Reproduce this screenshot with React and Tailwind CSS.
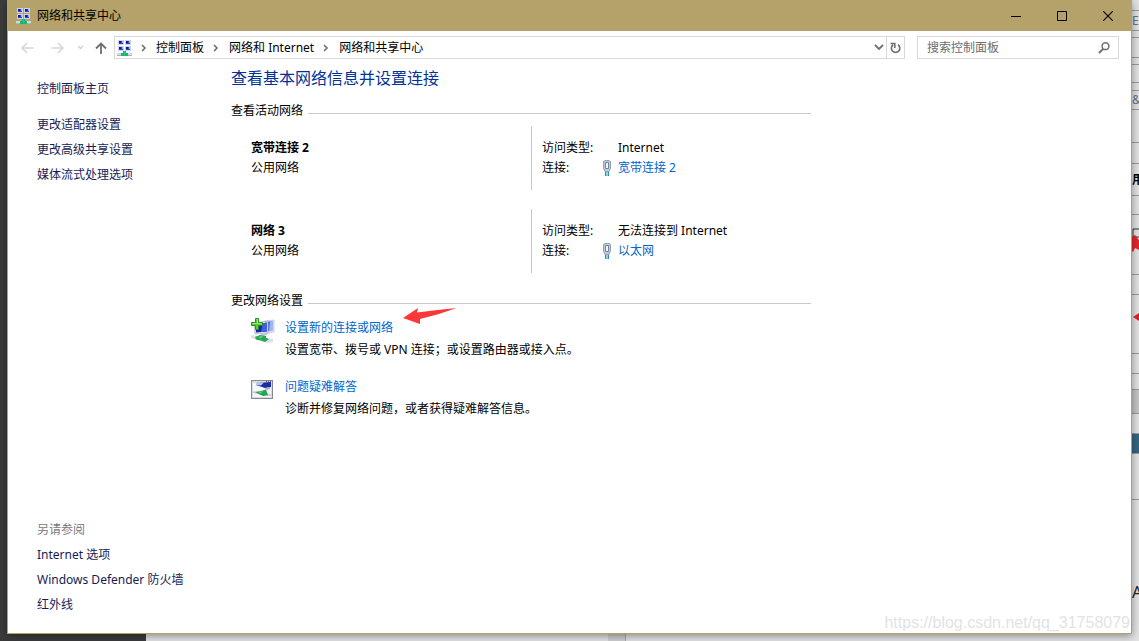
import React from "react";

const sideLinks = ["更改适配器设置", "更改高级共享设置", "媒体流式处理选项"];

const seeAlso = ["Internet 选项", "Windows Defender 防火墙", "红外线"];

const networks = [
  { name: "宽带连接 2", kind: "公用网络", access: "Internet", link: "宽带连接 2" },
  { name: "网络 3", kind: "公用网络", access: "无法连接到 Internet", link: "以太网" },
];

// rows of the window behind, only its edge is visible
const backRows = [
  { size: "h-[11px]" },
  { size: "h-5", text: "E", color: "text-slate-500" },
  { size: "h-[7px]" },
  { size: "h-5" },
  { size: "h-[7px]" },
  { size: "h-[18px]" },
  { size: "h-2" },
  { size: "h-[19px]", text: "&", color: "text-slate-500" },
  { size: "h-[33px]" },
  { size: "h-[21px]" },
  { size: "h-8", text: "用", color: "text-black font-bold" },
  { size: "h-[19px]" },
  { size: "h-[60px]", mark: "big" },
  { size: "h-5" },
  { size: "h-[59px]", mark: "small" },
  { size: "h-5" },
  { size: "h-4" },
  { size: "h-[24px]", fill: "bg-[#c4c4c4]" },
  { size: "h-5", fill: "bg-[#e2e2e2]" },
  { size: "h-5", fill: "bg-[#35647f]" },
  { size: "h-[46px]" },
];

const NetworkIcon = () => (
  <svg width="16" height="16" viewBox="0 0 16 16" className="shrink-0" aria-hidden="true">
    <path fill="#d3d4dd" d="M1 0h6v5H1zM8 0h6v5H8zM1 6h6v5H1zM8 6h6v5H8z" />
    <path fill="#2a49cc" d="M2 1h4v3H2zM9 1h4v3H9zM2 7h4v3H2zM9 7h4v3H9z" />
    <path fill="#8fa9f0" d="M5 1h1v2H5zM12 1h1v2h-1zM5 7h1v2H5zM12 7h1v2h-1z" />
    <path fill="#1018a0" d="M2 1h2v2H2zM9 1h2v2H9zM2 7h2v2H2zM9 7h2v2H9z" />
    <path fill="#d2dada" d="M0 13h15v2H0z" />
    <path fill="#a9b4b4" d="M0 15h15v1H0z" />
    <path fill="#12b878" d="M6 11h3v2h2v3H4v-3h2z" />
    <path fill="#19d08c" d="M7 11h1v4H7z" />
  </svg>
);

const PlugIcon = () => (
  <svg width="10" height="16" viewBox="0 0 10 16" className="shrink-0" aria-hidden="true">
    <path d="M3 .5h4l1.500 1v7L7 11.500H3L1.500 8.500v-7z" fill="#bccad9" stroke="#93a1b5" />
    <path d="M3.500 2.500h3v6h-3z" fill="#f4f7fb" stroke="#74849b" />
    <path d="M3 12h1.500v4H3zM5.500 12H7v4H5.500z" fill="#1e93bd" />
    <path d="M4.500 12h1v3h-1z" fill="#8fdcee" />
  </svg>
);

const NewConnectionIcon = () => (
  <svg width="24" height="26" viewBox="0 0 24 26" className="shrink-0" aria-hidden="true">
    <path d="M13 3l10-1v12l-9 2z" fill="#e1e5f0" stroke="#b3bacb" strokeWidth=".6" />
    <path d="M15 4l7-1v9l-7 2z" fill="#4763dc" />
    <path d="M19 3.500l3-.5v9l-4 1z" fill="#9fb6f4" />
    <path d="M3 5l14-2v12L4 16z" fill="#dfe3ef" stroke="#9ba4bb" strokeWidth=".6" />
    <path d="M4.500 6.500L16 4.500V13.500L5 14.500z" fill="#1727b0" />
    <path d="M12 5.200l4-.7v9l-6 .6z" fill="#3e63df" />
    <path d="M9 16l4-1 4 2-6 1z" fill="#c3c8d4" />
    <path d="M0 17l6 1 16 3v3L16 25 0 20z" fill="#dde1e6" />
    <path d="M4 19l5-2 6 1v2l3 1-4 3-4-1.500-5-1z" fill="#25a955" />
    <path d="M7 19l5-1-2 2z" fill="#7be09a" />
    <path d="M4.500.5h3v4h4v3h-4v4h-3v-4h-4v-3h4z" fill="#5fca3c" stroke="#2c8f22" />
    <path d="M5.500 1.500h1v4h4M1.500 5.500h4" fill="none" stroke="#a2ee7d" />
  </svg>
);

const TroubleshootIcon = () => (
  <svg width="24" height="20" viewBox="0 0 24 20" className="shrink-0" aria-hidden="true">
    <rect x=".5" y=".5" width="21" height="18" fill="#d9dce0" stroke="#84898f" />
    <path d="M2 3h18v14H2z" fill="#f6f8fa" />
    <path d="M15 1.500h1M17 1.500h1M19 1.500h1" stroke="#50545a" />
    <path d="M5 3l15-1v5l-6 1-9-3z" fill="#1b2ba4" />
    <path d="M5 3l8-.5-3 3-5-.5z" fill="#b9c5ec" />
    <path d="M14 8l5-1v2l-4 1z" fill="#aab0bd" />
    <path d="M2 11l7 1 11 2v2h-6L2 13z" fill="#cbd1d5" />
    <path d="M4 12l6-1 5-1.500 1 3 1 2.500-5 1-4-2z" fill="#23a552" />
    <path d="M7 12l5-.5-2 1.500z" fill="#7be09a" />
  </svg>
);

const Chevron = () => (
  <svg width="6" height="8" viewBox="0 0 6 8" className="shrink-0" aria-hidden="true">
    <path d="M1 1l3 3-3 3" fill="none" stroke="#6b6b6b" strokeWidth="1.500" />
  </svg>
);

const SectionTitle = ({ children }) => (
  <div className="flex items-start gap-[5px]">
    <h2 className="leading-[22px]">{children}</h2>
    <div className="mt-[13px] h-px flex-1 bg-[#c8c8c8]" />
  </div>
);

const Backdrop = () => (
  <div className="absolute inset-0 flex" aria-hidden="true">
    <div className="w-[146px] bg-[#3b3b3b]" />
    <div className="flex flex-1 justify-between bg-[#e2e2e2]">
      <div className="ml-[462px] w-[18px] border-r border-[#aaa] bg-[#cfcfcf]" />
      <div className="flex w-[7px] flex-col">
        {backRows.map((row, i) => (
          <div
            key={i}
            className={`flex shrink-0 items-center border-b border-[#999] text-xs ${row.size} ${row.fill || ""}`}
          >
            {row.text && <span className={row.color}>{row.text}</span>}
            {row.mark === "big" && (
              <svg width="7" height="36" viewBox="0 0 7 36" className="mb-1">
                <path d="M7 4H1v8h6" fill="none" stroke="#333" />
                <path d="M0 12l3-2 4 5v10l-4-2-2 4-1-1z" fill="#e2262b" />
              </svg>
            )}
            {row.mark === "small" && (
              <svg width="7" height="8" viewBox="0 0 7 8" className="mb-[15px]">
                <path d="M1 4l6-4v8z" fill="#d9252b" />
              </svg>
            )}
          </div>
        ))}
        <div className="mt-20 text-base text-[#222]">A</div>
      </div>
    </div>
  </div>
);

const TitleBar = () => (
  <header className="flex h-[31px] shrink-0 items-center bg-[#b5a26a] pl-2">
    <NetworkIcon />
    <h1 className="ml-[5px] flex-1">网络和共享中心</h1>
    <button className="flex h-[30px] w-[46px] items-center justify-center" aria-label="最小化">
      <svg width="10" height="10" viewBox="0 0 10 10"><path d="M0 5.500h10" stroke="#000" /></svg>
    </button>
    <button className="flex h-[30px] w-[46px] items-center justify-center" aria-label="最大化">
      <svg width="10" height="10" viewBox="0 0 10 10"><path d="M.5.5h9v9h-9z" fill="none" stroke="#000" /></svg>
    </button>
    <button className="flex h-[30px] w-[46px] items-center justify-center" aria-label="关闭">
      <svg width="10" height="10" viewBox="0 0 10 10"><path d="M0 0l10 10M10 0L0 10" stroke="#000" strokeWidth="1.100" /></svg>
    </button>
  </header>
);

const AddressBar = () => (
  <nav className="flex h-[35px] shrink-0 items-center pr-3 pb-[2px] pl-[13px]">
    <button aria-label="后退">
      <svg width="13" height="12" viewBox="0 0 13 12"><path d="M12.500 6H1.500M6 1L1 6l5 5" fill="none" stroke="#d6d6d6" strokeWidth="1.500" /></svg>
    </button>
    <button className="ml-[17px]" aria-label="前进">
      <svg width="13" height="12" viewBox="0 0 13 12"><path d="M.5 6h11M7 1l5 5-5 5" fill="none" stroke="#d6d6d6" strokeWidth="1.500" /></svg>
    </button>
    <button className="ml-[13px]" aria-label="最近位置">
      <svg width="7" height="5" viewBox="0 0 7 5"><path d="M1 1l2.500 2.500L6 1" fill="none" stroke="#cfcfcf" strokeWidth="1.300" /></svg>
    </button>
    <button className="ml-[11px]" aria-label="上移">
      <svg width="12" height="12" viewBox="0 0 12 12"><path d="M6 12V1.500M1 6.500l5-5 5 5" fill="none" stroke="#6f6f6f" strokeWidth="1.800" /></svg>
    </button>
    <div className="ml-[7px] flex h-[23px] flex-1 items-center border border-[#d9d9d9]">
      <div className="flex flex-1 items-center pl-[2px]">
        <NetworkIcon />
        <div className="ml-2 flex items-center gap-[9px]">
          <Chevron />
          <a href="#">控制面板</a>
          <Chevron />
          <a href="#" className="ml-px">网络和 Internet</a>
          <Chevron />
          <a href="#" className="ml-px">网络和共享中心</a>
        </div>
      </div>
      <button className="mr-[2px]" aria-label="以前的位置">
        <svg width="10" height="7" viewBox="0 0 10 7"><path d="M1 1l4 4 4-4" fill="none" stroke="#707070" strokeWidth="1.800" /></svg>
      </button>
      <button className="flex h-full w-[18px] items-center justify-center border-l border-[#d9d9d9]" aria-label="刷新">
        <svg width="11" height="12" viewBox="0 0 11 12">
          <path d="M3.200 2.800A4.200 4.200 0 1 0 8 2.800" fill="none" stroke="#707070" strokeWidth="1.700" />
          <path d="M.5 1.500h4.300V6" fill="none" stroke="#707070" strokeWidth="1.600" />
        </svg>
      </button>
    </div>
    <form className="ml-3 flex h-[23px] w-[202px] items-center border border-[#d9d9d9] pr-2 pl-[9px]">
      <input
        type="search"
        aria-label="搜索控制面板"
        placeholder="搜索控制面板"
        className="min-w-0 flex-1 placeholder-[#6d6d6d] outline-none"
      />
      <svg width="12" height="12" viewBox="0 0 12 12" aria-hidden="true">
        <circle cx="7.500" cy="4.200" r="3.400" fill="none" stroke="#707070" strokeWidth="1.500" />
        <path d="M5 7L1 11" stroke="#707070" strokeWidth="2" />
      </svg>
    </form>
  </nav>
);

const Sidebar = () => (
  <aside className="flex w-[223px] shrink-0 flex-col justify-between pt-[10px] pb-4 pl-[29px] leading-[25px] text-[#151c55]">
    <div>
      <a href="#">控制面板主页</a>
      <ul className="mt-[11px]">
        {sideLinks.map((text) => (
          <li key={text}><a href="#">{text}</a></li>
        ))}
      </ul>
    </div>
    <div>
      <h2 className="text-[#7a7a7a]">另请参阅</h2>
      <ul>
        {seeAlso.map((text) => (
          <li key={text}><a href="#">{text}</a></li>
        ))}
      </ul>
    </div>
  </aside>
);

const Network = ({ network }) => (
  <section className="flex leading-5">
    <div className="w-[300px] py-3 pl-5">
      <h3 className="font-bold">{network.name}</h3>
      <p>{network.kind}</p>
    </div>
    <dl className="flex-1 border-l border-[#c8c8c8] py-3 pl-[10px]">
      <div className="flex">
        <dt className="w-[76px]">访问类型:</dt>
        <dd>{network.access}</dd>
      </div>
      <div className="flex">
        <dt className="w-[60px]">连接:</dt>
        <dd className="flex items-center gap-[6px]">
          <PlugIcon />
          <a href="#" className="text-[#0066cc]">{network.link}</a>
        </dd>
      </div>
    </dl>
  </section>
);

const App = () => {
  return (
    <div className="relative h-screen overflow-hidden font-['Noto_Sans','Noto_Sans_CJK_SC',sans-serif] text-xs text-black">
      <Backdrop />
      <div className="relative h-full px-[7px] pb-[7px]">
        <div className="flex h-full flex-col border border-t-0 border-[#b5a26a] bg-white shadow-[0_2px_8px_rgba(0,0,0,0.4)]">
          <TitleBar />
          <AddressBar />
          <div className="flex flex-1">
            <Sidebar />
            <main className="max-w-[580px] flex-1">
              <h2 className="mb-[10px] text-base leading-6 text-[#003399]">查看基本网络信息并设置连接</h2>
              <SectionTitle>查看活动网络</SectionTitle>
              <div className="mt-1 mb-[17px] flex flex-col gap-[19px]">
                {networks.map((network) => (
                  <Network key={network.name} network={network} />
                ))}
              </div>
              <SectionTitle>更改网络设置</SectionTitle>
              <div className="mt-1 flex flex-col gap-[15px] pl-5 leading-[22px]">
                <div className="flex gap-[10px] pt-px">
                  <div className="pt-px"><NewConnectionIcon /></div>
                  <div>
                    <span className="relative inline-block">
                      <a href="#" className="text-[#0066cc]">设置新的连接或网络</a>
                      <svg width="56" height="18" viewBox="0 0 56 18" className="absolute -top-[11px] left-full ml-[9px]" aria-hidden="true">
                        <path d="M1 12L16 2l-1 4.500Q34 4 54.500 2 36 9 18 13l0 5z" fill="#fb3838" />
                      </svg>
                    </span>
                    <p>设置宽带、拨号或 VPN 连接；或设置路由器或接入点。</p>
                  </div>
                </div>
                <div className="flex gap-[10px]">
                  <div className="pt-1"><TroubleshootIcon /></div>
                  <div>
                    <a href="#" className="text-[#0066cc]">问题疑难解答</a>
                    <p>诊断并修复网络问题，或者获得疑难解答信息。</p>
                  </div>
                </div>
              </div>
            </main>
          </div>
        </div>
      </div>
      <div className="absolute right-[9px] bottom-[6px] font-['Liberation_Sans',sans-serif] text-base text-[#e3e3e3]">
        https://blog.csdn.net/qq_31758079
      </div>
    </div>
  );
};

export default App;
